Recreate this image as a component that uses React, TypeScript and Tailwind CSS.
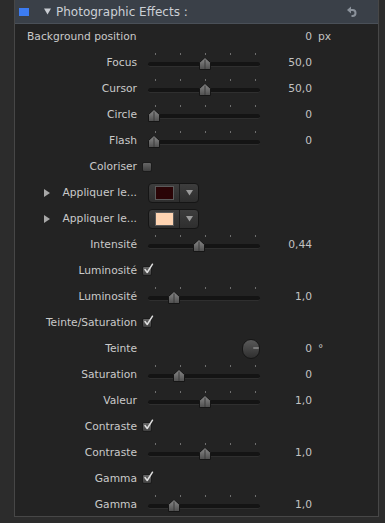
import React from "react"

type Row =
  | { kind: "bg"; label: string; value: string; unit: string }
  | { kind: "slider"; label: string; value: string; pos: number }
  | { kind: "check"; label: string; checked: boolean }
  | { kind: "color"; label: string; color: string }
  | { kind: "knob"; label: string; value: string; unit: string }

const rows: Row[] = [
  { kind: "bg", label: "Background position", value: "0", unit: "px" },
  { kind: "slider", label: "Focus", value: "50,0", pos: 57 },
  { kind: "slider", label: "Cursor", value: "50,0", pos: 57 },
  { kind: "slider", label: "Circle", value: "0", pos: 6 },
  { kind: "slider", label: "Flash", value: "0", pos: 6 },
  { kind: "check", label: "Coloriser", checked: false },
  { kind: "color", label: "Appliquer le...", color: "#2a0406" },
  { kind: "color", label: "Appliquer le...", color: "#ffd4b2" },
  { kind: "slider", label: "Intensité", value: "0,44", pos: 51 },
  { kind: "check", label: "Luminosité", checked: true },
  { kind: "slider", label: "Luminosité", value: "1,0", pos: 26 },
  { kind: "check", label: "Teinte/Saturation", checked: true },
  { kind: "knob", label: "Teinte", value: "0", unit: "°" },
  { kind: "slider", label: "Saturation", value: "0", pos: 31 },
  { kind: "slider", label: "Valeur", value: "1,0", pos: 57 },
  { kind: "check", label: "Contraste", checked: true },
  { kind: "slider", label: "Contraste", value: "1,0", pos: 57 },
  { kind: "check", label: "Gamma", checked: true },
  { kind: "slider", label: "Gamma", value: "1,0", pos: 26 },
]

const font = { fontFamily: '"Lucida Grande", "DejaVu Sans", sans-serif' }

function Thumb({ left }: { left: number }) {
  return (
    <svg className="absolute top-[7px]" style={{ left: left - 6 }} width="12" height="13" viewBox="0 0 12 13">
      <defs>
        <linearGradient id="thumbGrad" x1="0" y1="0" x2="0" y2="1">
          <stop offset="0" stopColor="#8c8c8c" />
          <stop offset="1" stopColor="#4e4e4e" />
        </linearGradient>
      </defs>
      <path d="M0.5 5.5 L6 0.5 L11.5 5.5 L11.5 12.5 L0.5 12.5 Z" fill="url(#thumbGrad)" stroke="#151515" />
      <line x1="6" y1="2.5" x2="6" y2="12" stroke="#3b3b3b" strokeWidth="1" />
    </svg>
  )
}

function Slider({ pos }: { pos: number }) {
  return (
    <div className="relative w-[112px] h-[26px] shrink-0">
      {[7, 32, 57, 82, 107].map((x) => (
        <div key={x} className="absolute top-[3px] w-px h-[2px] bg-[#6e6e6e]" style={{ left: x }} />
      ))}
      <div className="absolute left-0 right-0 top-[12px] h-[5px] rounded-full bg-[#141414] border-b border-[#2f2f2f]" />
      <Thumb left={pos} />
    </div>
  )
}

function Check({ checked }: { checked: boolean }) {
  return (
    <div className="relative w-[10px] h-[10px] ml-[5px] rounded-[2px] border border-[#1b1b1b] bg-gradient-to-b from-[#666666] to-[#404040]">
      {checked && (
        <svg className="absolute -top-[4px] left-[0px]" width="11" height="12" viewBox="0 0 11 12">
          <path d="M2 6.5 L4.2 9.5 L9.5 1.2" fill="none" stroke="#dedede" strokeWidth="1.5" strokeLinecap="round" strokeLinejoin="round" />
        </svg>
      )}
    </div>
  )
}

function ColorWell({ color }: { color: string }) {
  return (
    <div className="flex w-[51px] h-[20px] rounded-[4px] border border-[#151515] bg-gradient-to-b from-[#3d3d3d] to-[#2e2e2e]">
      <div className="w-[31px] flex items-center justify-center border-r border-[#1c1c1c]">
        <div className="w-[19px] h-[14px] border border-[#5a5a5a]" style={{ background: color }} />
      </div>
      <div className="flex-1 flex items-center justify-center">
        <svg width="7" height="6" viewBox="0 0 7 6">
          <path d="M0 0 L7 0 L3.5 5.5 Z" fill="#9a9a9a" />
        </svg>
      </div>
    </div>
  )
}

function Knob() {
  return (
    <div className="w-[112px] h-[26px] flex items-center shrink-0">
      <div className="relative ml-[94px] w-[20px] h-[20px] rounded-full border border-[#161616] bg-gradient-to-b from-[#5a5a5a] to-[#2f2f2f]">
        <div className="absolute left-[10px] top-[7px] w-[6px] h-[2px] rounded-full bg-[#7a7a7a]" />
      </div>
    </div>
  )
}

function Value({ value, unit }: { value: string; unit?: string }) {
  return (
    <div className="flex items-center">
      <div className="w-[52px] text-right text-[#c2c2c2]">{value}</div>
      {unit && <div className="ml-[6px] text-[#c2c2c2]">{unit}</div>}
    </div>
  )
}

function Label({ text, arrow }: { text: string; arrow?: boolean }) {
  return (
    <div className="w-[122px] shrink-0 flex items-center justify-end text-[#cacaca] whitespace-nowrap">
      {arrow && (
        <svg className="mr-auto ml-[29px]" width="6" height="8" viewBox="0 0 6 8">
          <path d="M0 0 L6 4 L0 8 Z" fill="#a8a8a8" />
        </svg>
      )}
      {text}
    </div>
  )
}

function RowView({ row }: { row: Row }) {
  if (row.kind === "bg") {
    return (
      <div className="flex items-center h-[26px]">
        <div className="pl-[12px] w-[245px] text-[#cacaca]">{row.label}</div>
        <Value value={row.value} unit={row.unit} />
      </div>
    )
  }
  if (row.kind === "check") {
    return (
      <div className="flex items-center h-[26px]">
        <Label text={row.label} />
        <Check checked={row.checked} />
      </div>
    )
  }
  if (row.kind === "color") {
    return (
      <div className="flex items-center h-[26px]">
        <Label text={row.label} arrow />
        <div className="ml-[11px]">
          <ColorWell color={row.color} />
        </div>
      </div>
    )
  }
  if (row.kind === "knob") {
    return (
      <div className="flex items-center h-[26px]">
        <Label text={row.label} />
        <div className="ml-[11px]">
          <Knob />
        </div>
        <Value value={row.value} unit={row.unit} />
      </div>
    )
  }
  return (
    <div className="flex items-center h-[26px]">
      <Label text={row.label} />
      <div className="ml-[11px]">
        <Slider pos={row.pos} />
      </div>
      <Value value={row.value} />
    </div>
  )
}

export default function App() {
  return (
    <div className="w-[385px] h-[523px] bg-[#2c2c2c] flex overflow-hidden text-[10.7px]" style={font}>
      <div className="w-[14px] shrink-0" />
      <div className="w-[365px] shrink-0 self-start flex flex-col border-x border-b border-[#474747] bg-[#232323]">
        <div className="h-[24px] flex items-center bg-[#3a4048] border-b border-[#4a5058]">
          <div className="ml-[4px] w-[10px] h-[8px] bg-[#3c7cf2]" />
          <svg className="ml-[15px]" width="7" height="7" viewBox="0 0 7 7">
            <path d="M0 0.5 L7 0.5 L3.5 6.5 Z" fill="#c9cdd3" />
          </svg>
          <span className="ml-[5px] text-[12px] text-[#ccd0d6]">Photographic Effects :</span>
          <svg className="ml-auto mr-[21px]" width="10" height="12" viewBox="0 0 10 12">
            <path d="M0 4 L4 0.5 L4 7.5 Z" fill="#8b929b" />
            <path d="M3.5 4 H5.5 A3 3 0 0 1 5.5 10 H4.5" fill="none" stroke="#8b929b" strokeWidth="2" />
          </svg>
        </div>
        <div className="h-[492px] overflow-hidden">
          {rows.map((row, i) => (
            <RowView key={i} row={row} />
          ))}
        </div>
      </div>
    </div>
  )
}
